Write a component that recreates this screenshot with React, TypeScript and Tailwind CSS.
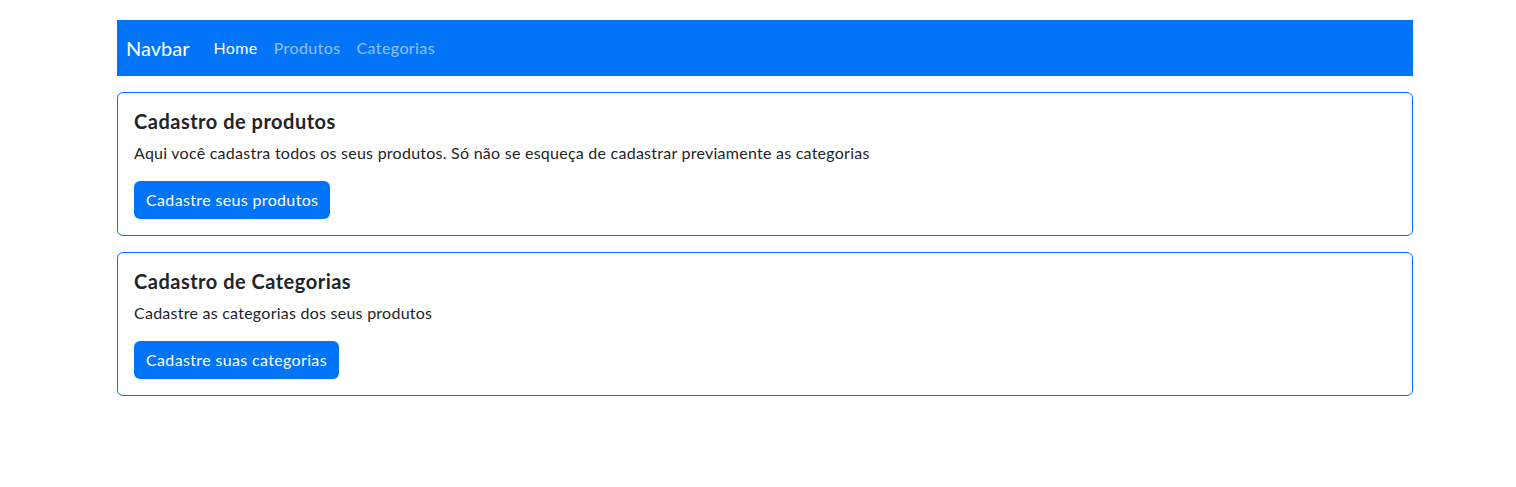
export default function App() {
  const cards = [
    {
      title: 'Cadastro de produtos',
      text: 'Aqui você cadastra todos os seus produtos. Só não se esqueça de cadastrar previamente as categorias',
      button: 'Cadastre seus produtos',
    },
    {
      title: 'Cadastro de Categorias',
      text: 'Cadastre as categorias dos seus produtos',
      button: 'Cadastre suas categorias',
    },
  ];

  return (
    <div className="min-h-screen bg-white pt-5 pl-[117px] font-['Lato',sans-serif] tracking-[0.25px] text-[#212529]">
      <div className="w-[1296px]">
        <nav className="flex h-14 items-center bg-[#0274f7] px-[9px]">
          <span className="mr-4 text-xl tracking-normal text-white">Navbar</span>
          <ul className="flex tracking-[0.4px]">
            <li className="px-2 text-white">Home</li>
            <li className="px-2 text-white/55">Produtos</li>
            <li className="px-2 text-white/55">Categorias</li>
          </ul>
        </nav>

        {cards.map((card) => (
          <div key={card.title} className="mt-4 rounded-md border border-[#0274f7] p-4">
            <h5 className="mb-2 text-xl leading-6 font-bold tracking-[0.5px]">{card.title}</h5>
            <p className="mb-4 leading-6">{card.text}</p>
            <button className="rounded-md bg-[#0274f7] px-3 py-1.5 leading-[26px] tracking-[0.35px] text-white">
              {card.button}
            </button>
          </div>
        ))}
      </div>
    </div>
  );
}
